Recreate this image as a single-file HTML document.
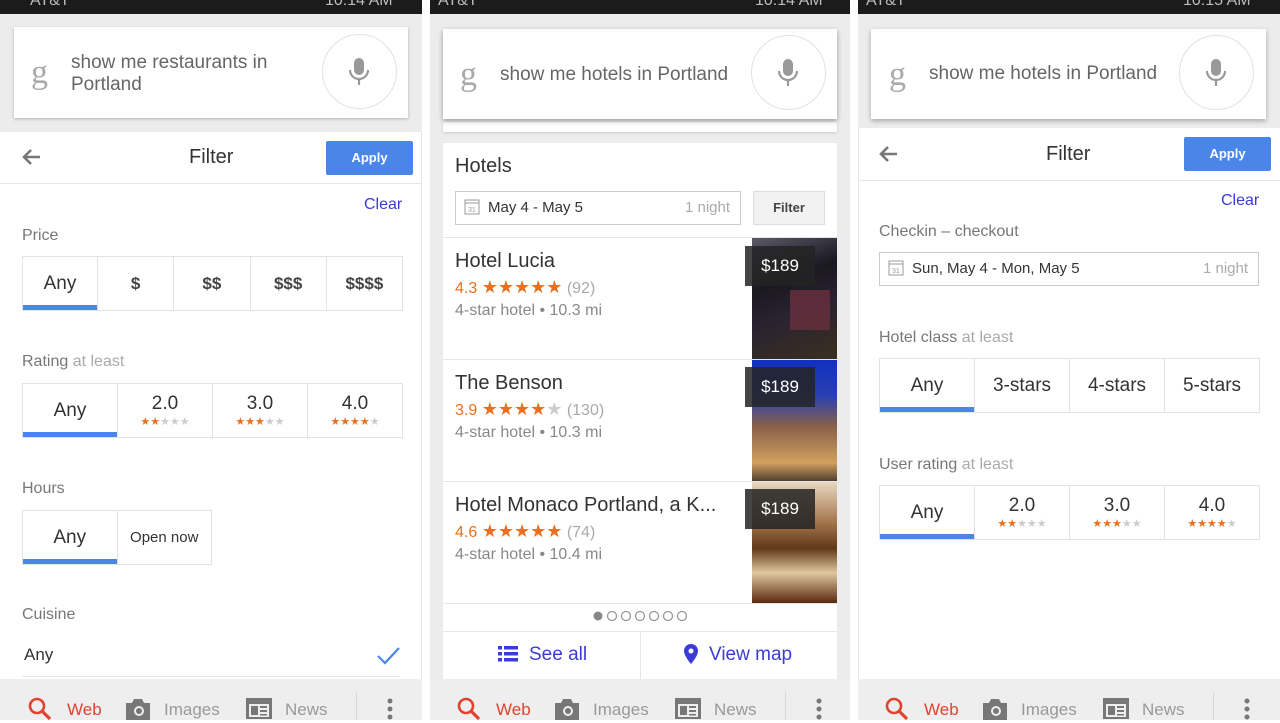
<!DOCTYPE html>
<html><head><meta charset="utf-8"><style>
*{margin:0;padding:0;box-sizing:border-box}
body{width:1280px;height:720px;overflow:hidden;background:#fff;font-family:"Liberation Sans",Arial,sans-serif;position:relative;color:#222}
.a{position:absolute}
.sb{background:#1b1b1b;height:14px;top:0;color:#bbb;font-size:15px;line-height:6px;overflow:hidden}
.card{background:#fff;box-shadow:0 1px 3px rgba(0,0,0,.25)}
.g{font-family:"Liberation Serif",serif;color:#aaa;font-size:34px}
.q{color:#666;font-size:19px;line-height:22px}
.mic{border:1px solid #e2e2e2;border-radius:50%;width:75px;height:75px;background:#fff}
.lbl{color:#777;font-size:16px}
.lbl span{color:#aaa}
.seg{border:1px solid #e3e3e3;display:flex;background:#fff}
.seg div{flex:1;border-left:1px solid #e3e3e3;text-align:center;font-size:19px;color:#333;position:relative;display:flex;flex-direction:column;justify-content:center;align-items:center}
.seg div:first-child{border-left:none}
.seg div.on:after{content:"";position:absolute;left:0;right:0;bottom:0;height:5px;background:#4a86e8}
.st{font-size:11px;letter-spacing:0;line-height:11px;margin-top:2px}
.o{color:#e8701e}.gr{color:#ccc}
.hs{font-size:18px}
.apply{background:#4a86e8;color:#fff;font-size:13px;font-weight:bold;text-align:center;border-radius:2px}
.nav{background:#eeeeee;top:679px;height:41px}
.clear{color:#3b3bd6;font-size:16px}
</style></head><body>

<!-- PANEL 1 -->
<div class="a" style="left:0;top:0;width:422px;height:720px;background:#fff;border-right:1px solid #e6e6e6"></div>
<div class="a sb" style="left:0;width:422px"></div>
<div class="a" style="left:0;top:14px;width:422px;height:118px;background:#ececec"></div>
<div class="a card" style="left:14px;top:27px;width:394px;height:91px"></div>
<div class="a g" style="left:31px;top:54px">g</div>
<div class="a q" style="left:71px;top:52px">show me restaurants in<br>Portland</div>
<div class="a mic" style="left:322px;top:34px"></div>
<svg class="a" style="left:347px;top:57px" width="24" height="30" viewBox="0 0 24 30"><rect x="7" y="1" width="10" height="17" rx="5" fill="#999"/><path d="M3 13a9 9 0 0 0 18 0" stroke="#999" stroke-width="2.2" fill="none"/><path d="M12 22v6" stroke="#999" stroke-width="2.2"/></svg>
<div class="a" style="left:0;top:132px;width:422px;height:52px;border-bottom:1px solid #e6e6e6"></div>
<svg class="a" style="left:21px;top:148px" width="20" height="18" viewBox="0 0 20 18"><path d="M19 9H3M10 2L3 9l7 7" stroke="#777" stroke-width="2.6" fill="none"/></svg>
<div class="a" style="left:189px;top:146px;font-size:20px;color:#333">Filter</div>
<div class="a apply" style="left:326px;top:141px;width:87px;height:34px;line-height:34px">Apply</div>
<div class="a clear" style="left:364px;top:196px">Clear</div>
<div class="a lbl" style="left:22px;top:227px">Price</div>
<div class="a seg" style="left:22px;top:256px;width:381px;height:55px">
<div class="on" style="flex:0 0 74px">Any</div><div style="font-size:17px;font-weight:bold;color:#444">$</div><div style="font-size:17px;font-weight:bold;color:#444">$$</div><div style="font-size:17px;font-weight:bold;color:#444">$$$</div><div style="font-size:17px;font-weight:bold;color:#444">$$$$</div></div>
<div class="a lbl" style="left:22px;top:353px">Rating <span>at least</span></div>
<div class="a seg" style="left:22px;top:383px;width:381px;height:55px">
<div class="on">Any</div><div>2.0<span class="st"><span class="o">★★</span><span class="gr">★★★</span></span></div><div>3.0<span class="st"><span class="o">★★★</span><span class="gr">★★</span></span></div><div>4.0<span class="st"><span class="o">★★★★</span><span class="gr">★</span></span></div></div>
<div class="a lbl" style="left:22px;top:480px">Hours</div>
<div class="a seg" style="left:22px;top:510px;width:190px;height:55px">
<div class="on">Any</div><div style="font-size:15px">Open now</div></div>
<div class="a lbl" style="left:22px;top:606px">Cuisine</div>
<div class="a" style="left:24px;top:645px;font-size:17px;color:#333">Any</div>
<svg class="a" style="left:376px;top:646px" width="25" height="20" viewBox="0 0 25 20"><path d="M2 10l7 7L23 2" stroke="#4a86e8" stroke-width="2.2" fill="none"/></svg>
<div class="a" style="left:22px;top:676px;width:378px;height:1px;background:#e6e6e6"></div>

<!-- PANEL 2 -->
<div class="a" style="left:430px;top:0;width:420px;height:720px;background:#ececec"></div>
<div class="a sb" style="left:430px;width:420px"></div>
<div class="a card" style="left:443px;top:122px;width:394px;height:10px;box-shadow:0 1px 2px rgba(0,0,0,.15)"></div>
<div class="a card" style="left:443px;top:29px;width:394px;height:90px;box-shadow:0 2px 5px rgba(0,0,0,.35)"></div>
<div class="a g" style="left:460px;top:56px">g</div>
<div class="a q" style="left:500px;top:64px">show me hotels in Portland</div>
<div class="a mic" style="left:751px;top:35px"></div>
<svg class="a" style="left:776px;top:58px" width="24" height="30" viewBox="0 0 24 30"><rect x="7" y="1" width="10" height="17" rx="5" fill="#999"/><path d="M3 13a9 9 0 0 0 18 0" stroke="#999" stroke-width="2.2" fill="none"/><path d="M12 22v6" stroke="#999" stroke-width="2.2"/></svg>
<div class="a" style="left:443px;top:143px;width:394px;height:537px;background:#fff"></div>
<div class="a" style="left:455px;top:155px;font-size:20px;color:#333">Hotels</div>
<div class="a" style="left:455px;top:191px;width:286px;height:34px;border:1px solid #ccc"></div>
<svg class="a" style="left:464px;top:199px" width="16" height="16" viewBox="0 0 16 16"><rect x="1" y="1" width="14" height="14" fill="none" stroke="#999"/><path d="M1 4h14" stroke="#999"/><text x="4" y="13" font-size="7" fill="#999" font-family="Liberation Sans">31</text></svg>
<div class="a" style="left:488px;top:199px;font-size:15px;color:#333">May 4 - May 5</div>
<div class="a" style="left:685px;top:199px;font-size:15px;color:#aaa">1 night</div>
<div class="a" style="left:753px;top:191px;width:72px;height:34px;background:#f2f2f2;border:1px solid #ddd;text-align:center;line-height:32px;font-size:13px;font-weight:bold;color:#444">Filter</div>
<div class="a" style="left:443px;top:237px;width:394px;height:1px;background:#e6e6e6"></div>
<div class="a" style="left:443px;top:359px;width:394px;height:1px;background:#e6e6e6"></div>
<div class="a" style="left:443px;top:481px;width:394px;height:1px;background:#e6e6e6"></div>
<div class="a" style="left:443px;top:603px;width:394px;height:1px;background:#e6e6e6"></div>
<div class="a" style="left:752px;top:238px;width:85px;height:121px;background:linear-gradient(160deg,#5a5a6a 0%,#1a1820 35%,#2a2230 60%,#3a3020 100%)"></div>
<div class="a" style="left:790px;top:290px;width:40px;height:40px;background:#6a3040;opacity:.8"></div>
<div class="a" style="left:752px;top:360px;width:85px;height:121px;background:linear-gradient(180deg,#1030c0 0%,#2a40b0 30%,#8a6048 55%,#d0a060 85%,#504030 100%)"></div>
<div class="a" style="left:752px;top:482px;width:85px;height:121px;background:linear-gradient(180deg,#e8d8c0 0%,#a07048 35%,#603818 55%,#e0c8a0 75%,#5a2810 100%)"></div>
<div class="a" style="left:745px;top:246px;width:70px;height:40px;background:rgba(35,35,35,.85);color:#fff;font-size:17px;text-align:center;line-height:40px">$189</div>
<div class="a" style="left:745px;top:367px;width:70px;height:40px;background:rgba(35,35,35,.85);color:#fff;font-size:17px;text-align:center;line-height:40px">$189</div>
<div class="a" style="left:745px;top:489px;width:70px;height:40px;background:rgba(35,35,35,.85);color:#fff;font-size:17px;text-align:center;line-height:40px">$189</div>
<div class="a" style="left:455px;top:250px;font-size:20px;color:#333">Hotel Lucia</div>
<div class="a" style="left:455px;top:277px;font-size:16px;color:#aaa"><span class="o">4.3 <span class="hs">★★★★★</span></span> (92)</div>
<div class="a" style="left:455px;top:302px;font-size:16px;color:#888">4-star hotel • 10.3 mi</div>
<div class="a" style="left:455px;top:372px;font-size:20px;color:#333">The Benson</div>
<div class="a" style="left:455px;top:399px;font-size:16px;color:#aaa"><span class="o">3.9 <span class="hs">★★★★</span></span><span class="gr hs">★</span> (130)</div>
<div class="a" style="left:455px;top:424px;font-size:16px;color:#888">4-star hotel • 10.3 mi</div>
<div class="a" style="left:455px;top:494px;font-size:20px;color:#333">Hotel Monaco Portland, a K...</div>
<div class="a" style="left:455px;top:521px;font-size:16px;color:#aaa"><span class="o">4.6 <span class="hs">★★★★★</span></span> (74)</div>
<div class="a" style="left:455px;top:546px;font-size:16px;color:#888">4-star hotel • 10.4 mi</div>
<svg class="a" style="left:592px;top:610px" width="96" height="12" viewBox="0 0 96 12"><circle cx="6" cy="6" r="4.5" fill="#888"/><g fill="none" stroke="#999" stroke-width="1.3"><circle cx="20" cy="6" r="4.5"/><circle cx="34" cy="6" r="4.5"/><circle cx="48" cy="6" r="4.5"/><circle cx="62" cy="6" r="4.5"/><circle cx="76" cy="6" r="4.5"/><circle cx="90" cy="6" r="4.5"/></g></svg>
<div class="a" style="left:443px;top:631px;width:394px;height:1px;background:#e6e6e6"></div>
<div class="a" style="left:640px;top:631px;width:1px;height:49px;background:#e6e6e6"></div>
<svg class="a" style="left:498px;top:646px" width="20" height="16" viewBox="0 0 20 16"><g fill="#3b3bd6"><rect x="0" y="0" width="4" height="3.5"/><rect x="6" y="0" width="14" height="3.5"/><rect x="0" y="6" width="4" height="3.5"/><rect x="6" y="6" width="14" height="3.5"/><rect x="0" y="12" width="4" height="3.5"/><rect x="6" y="12" width="14" height="3.5"/></g></svg>
<div class="a" style="left:529px;top:644px;font-size:19px;color:#3b3bd6">See all</div>
<svg class="a" style="left:684px;top:644px" width="14" height="20" viewBox="0 0 14 20"><path d="M7 0a7 7 0 0 0-7 7c0 5 7 13 7 13s7-8 7-13a7 7 0 0 0-7-7z" fill="#3b3bd6"/><circle cx="7" cy="7" r="2.5" fill="#fff"/></svg>
<div class="a" style="left:709px;top:644px;font-size:19px;color:#3b3bd6">View map</div>

<!-- PANEL 3 -->
<div class="a" style="left:858px;top:0;width:422px;height:720px;background:#fff;border-left:1px solid #e6e6e6"></div>
<div class="a sb" style="left:858px;width:422px"></div>
<div class="a" style="left:858px;top:14px;width:422px;height:114px;background:#ececec"></div>
<div class="a card" style="left:871px;top:29px;width:395px;height:90px;box-shadow:0 2px 5px rgba(0,0,0,.3)"></div>
<div class="a g" style="left:889px;top:56px">g</div>
<div class="a q" style="left:929px;top:63px">show me hotels in Portland</div>
<div class="a mic" style="left:1179px;top:35px"></div>
<svg class="a" style="left:1204px;top:58px" width="24" height="30" viewBox="0 0 24 30"><rect x="7" y="1" width="10" height="17" rx="5" fill="#999"/><path d="M3 13a9 9 0 0 0 18 0" stroke="#999" stroke-width="2.2" fill="none"/><path d="M12 22v6" stroke="#999" stroke-width="2.2"/></svg>
<div class="a" style="left:858px;top:128px;width:422px;height:53px;border-bottom:1px solid #e6e6e6"></div>
<svg class="a" style="left:878px;top:145px" width="20" height="18" viewBox="0 0 20 18"><path d="M19 9H3M10 2L3 9l7 7" stroke="#777" stroke-width="2.6" fill="none"/></svg>
<div class="a" style="left:1046px;top:143px;font-size:20px;color:#333">Filter</div>
<div class="a apply" style="left:1184px;top:137px;width:87px;height:34px;line-height:34px">Apply</div>
<div class="a clear" style="left:1221px;top:192px">Clear</div>
<div class="a lbl" style="left:879px;top:223px">Checkin – checkout</div>
<div class="a" style="left:879px;top:252px;width:380px;height:34px;border:1px solid #ccc"></div>
<svg class="a" style="left:888px;top:260px" width="16" height="16" viewBox="0 0 16 16"><rect x="1" y="1" width="14" height="14" fill="none" stroke="#999"/><path d="M1 4h14" stroke="#999"/><text x="4" y="13" font-size="7" fill="#999" font-family="Liberation Sans">31</text></svg>
<div class="a" style="left:912px;top:260px;font-size:15px;color:#333">Sun, May 4 - Mon, May 5</div>
<div class="a" style="left:1203px;top:260px;font-size:15px;color:#aaa">1 night</div>
<div class="a lbl" style="left:879px;top:329px">Hotel class <span>at least</span></div>
<div class="a seg" style="left:879px;top:358px;width:381px;height:55px">
<div class="on">Any</div><div>3-stars</div><div>4-stars</div><div>5-stars</div></div>
<div class="a lbl" style="left:879px;top:456px">User rating <span>at least</span></div>
<div class="a seg" style="left:879px;top:485px;width:381px;height:55px">
<div class="on">Any</div><div>2.0<span class="st"><span class="o">★★</span><span class="gr">★★★</span></span></div><div>3.0<span class="st"><span class="o">★★★</span><span class="gr">★★</span></span></div><div>4.0<span class="st"><span class="o">★★★★</span><span class="gr">★</span></span></div></div>

<!-- NAVS -->
<div class="a nav" style="left:0;width:422px"></div>
<div class="a nav" style="left:430px;width:420px"></div>
<div class="a nav" style="left:858px;width:422px"></div>

<svg width="0" height="0" style="position:absolute"><defs>
<g id="srch"><circle cx="9" cy="9" r="7" fill="none" stroke="#e0432f" stroke-width="2.6"/><path d="M14 14l8 8" stroke="#e0432f" stroke-width="3.2"/></g>
<g id="cam"><path d="M0 6h6l2-4h8l2 4h6v17H0z" fill="#777"/><circle cx="13" cy="14" r="5" fill="#eee"/><circle cx="13" cy="14" r="3" fill="#777"/></g>
<g id="news"><rect x="0" y="2" width="26" height="21" fill="#777"/><rect x="3" y="8" width="20" height="13" fill="#eee"/><rect x="5" y="10" width="7" height="9" fill="#777"/><rect x="14" y="10" width="7" height="2" fill="#777"/><rect x="14" y="14" width="7" height="2" fill="#777"/><rect x="14" y="18" width="7" height="1.5" fill="#777"/></g>
</defs></svg>

<div class="a" style="left:0;top:0">
<svg class="a" style="left:28px;top:697px" width="26" height="26"><use href="#srch"/></svg>
<div class="a" style="left:67px;top:700px;font-size:17px;color:#e0432f">Web</div>
<svg class="a" style="left:126px;top:697px" width="26" height="26"><use href="#cam"/></svg>
<div class="a" style="left:164px;top:700px;font-size:17px;color:#999">Images</div>
<svg class="a" style="left:246px;top:696px" width="26" height="26"><use href="#news"/></svg>
<div class="a" style="left:285px;top:700px;font-size:17px;color:#999">News</div>
<div class="a" style="left:356px;top:692px;width:1px;height:28px;background:#d8d8d8"></div>
<svg class="a" style="left:386px;top:698px" width="8" height="22"><circle cx="4" cy="3" r="2.5" fill="#777"/><circle cx="4" cy="11" r="2.5" fill="#777"/><circle cx="4" cy="19" r="2.5" fill="#777"/></svg>
</div>
<div class="a" style="left:429px;top:0">
<svg class="a" style="left:28px;top:697px" width="26" height="26"><use href="#srch"/></svg>
<div class="a" style="left:67px;top:700px;font-size:17px;color:#e0432f">Web</div>
<svg class="a" style="left:126px;top:697px" width="26" height="26"><use href="#cam"/></svg>
<div class="a" style="left:164px;top:700px;font-size:17px;color:#999">Images</div>
<svg class="a" style="left:246px;top:696px" width="26" height="26"><use href="#news"/></svg>
<div class="a" style="left:285px;top:700px;font-size:17px;color:#999">News</div>
<div class="a" style="left:356px;top:692px;width:1px;height:28px;background:#d8d8d8"></div>
<svg class="a" style="left:386px;top:698px" width="8" height="22"><circle cx="4" cy="3" r="2.5" fill="#777"/><circle cx="4" cy="11" r="2.5" fill="#777"/><circle cx="4" cy="19" r="2.5" fill="#777"/></svg>
</div>
<div class="a" style="left:857px;top:0">
<svg class="a" style="left:28px;top:697px" width="26" height="26"><use href="#srch"/></svg>
<div class="a" style="left:67px;top:700px;font-size:17px;color:#e0432f">Web</div>
<svg class="a" style="left:126px;top:697px" width="26" height="26"><use href="#cam"/></svg>
<div class="a" style="left:164px;top:700px;font-size:17px;color:#999">Images</div>
<svg class="a" style="left:246px;top:696px" width="26" height="26"><use href="#news"/></svg>
<div class="a" style="left:285px;top:700px;font-size:17px;color:#999">News</div>
<div class="a" style="left:356px;top:692px;width:1px;height:28px;background:#d8d8d8"></div>
<svg class="a" style="left:386px;top:698px" width="8" height="22"><circle cx="4" cy="3" r="2.5" fill="#777"/><circle cx="4" cy="11" r="2.5" fill="#777"/><circle cx="4" cy="19" r="2.5" fill="#777"/></svg>
</div>

<!-- status bar text -->
<div class="a" style="left:30px;top:-8px;font-size:16px;color:#bbb">AT&amp;T</div>
<div class="a" style="left:325px;top:-8px;font-size:16px;color:#bbb">10:14 AM</div>
<div class="a" style="left:438px;top:-8px;font-size:16px;color:#bbb">AT&amp;T</div>
<div class="a" style="left:755px;top:-8px;font-size:16px;color:#bbb">10:14 AM</div>
<div class="a" style="left:866px;top:-8px;font-size:16px;color:#bbb">AT&amp;T</div>
<div class="a" style="left:1183px;top:-8px;font-size:16px;color:#bbb">10:15 AM</div>
</body></html>
